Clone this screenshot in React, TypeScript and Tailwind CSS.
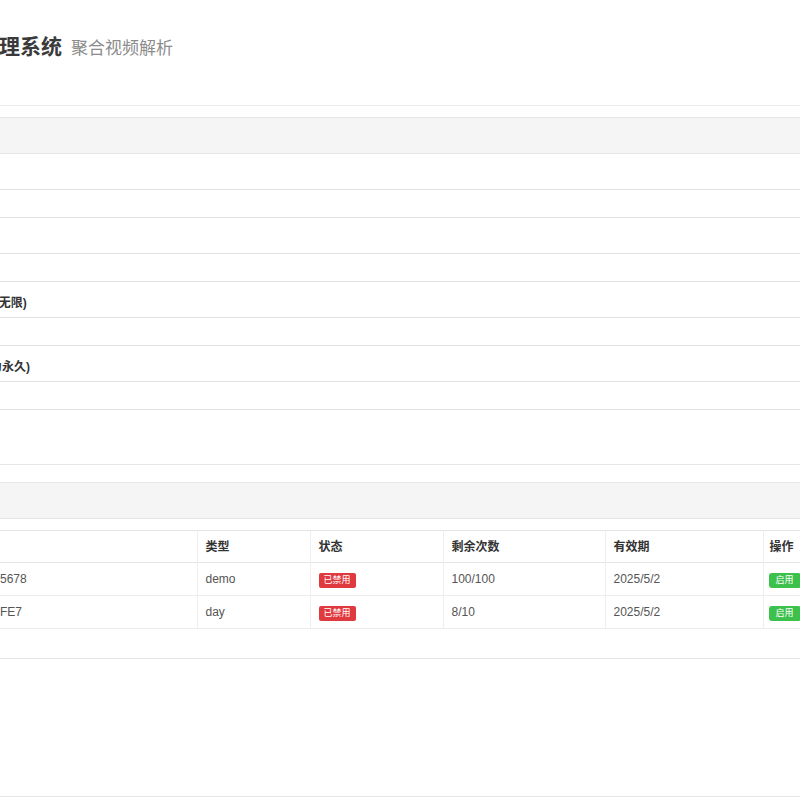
import React from 'react';

interface CardKey {
  id: string;
  code: string;
  type: string;
  remaining: string;
  expires: string;
}

const keys: CardKey[] = [
  { id: '1', code: 'DEMO-5678', type: 'demo', remaining: '100/100', expires: '2025/5/2' },
  { id: '2', code: 'ABC3DFE7', type: 'day', remaining: '8/10', expires: '2025/5/2' },
];

const fields = ['类型', '数量', '次数(0为无限)', '天数 (0为永久)'];

export default function App() {
  return (
    <div
      className="w-[800px] h-[800px] overflow-hidden bg-white text-[#333]"
      style={{ fontFamily: '"Liberation Sans", "Noto Sans CJK SC", sans-serif' }}
    >
      <div className="-ml-[64px] w-[1000px]">
        <header className="pt-[32px] pb-[43px] border-b border-[#ececec] flex items-baseline gap-[9px]">
          <h1 className="text-[21px] leading-[30px] font-bold text-[#3a3a3a]">卡密管理系统</h1>
          <span className="text-[17px] text-[#8c8c8c]">聚合视频解析</span>
        </header>

        <section className="mt-[11px] border border-[#e6e6e6]">
          <div className="h-[36px] bg-[#f5f5f5] border-b border-[#e6e6e6] px-[15px] text-[14px] leading-[35px]">生成</div>
          <div className="px-[15px]">
            {fields.map((label) => (
              <div key={label} className="pt-[13px]">
                <label className="block text-[12px] leading-[17px] mb-[5px] font-bold text-[#333]">{label}</label>
                <div className="h-[29px] border border-[#e2e2e2] rounded-[3px] bg-white" />
              </div>
            ))}
            <div className="pt-[12px] pb-[14px]">
              <button className="h-[28px] px-1 text-[12px] bg-[#337ab7] text-white rounded-[3px]">生成</button>
            </div>
          </div>
        </section>

        <section className="mt-[17px] border border-[#e6e6e6]">
          <div className="h-[36px] bg-[#f5f5f5] border-b border-[#e6e6e6] px-[15px] text-[14px] leading-[35px]">列表</div>
          <div className="px-[15px] pt-[11px] pb-[29px]">
            <table className="w-full table-fixed border-collapse text-[12px]">
              <colgroup>
                <col className="w-[245px]" />
                <col className="w-[113px]" />
                <col className="w-[133px]" />
                <col className="w-[162px]" />
                <col className="w-[158px]" />
                <col />
              </colgroup>
              <thead>
                <tr className="h-[32px] border-t border-b border-[#e4e4e4] text-left">
                  <th className="px-2 font-bold text-[#333] border-r border-[#eeeeee]">卡密</th>
                  <th className="px-2 font-bold text-[#333] border-r border-[#eeeeee]">类型</th>
                  <th className="px-2 font-bold text-[#333] border-r border-[#eeeeee]">状态</th>
                  <th className="px-2 font-bold text-[#333] border-r border-[#eeeeee]">剩余次数</th>
                  <th className="px-2 font-bold text-[#333] border-r border-[#eeeeee]">有效期</th>
                  <th className="px-[6px] font-bold text-[#333]">操作</th>
                </tr>
              </thead>
              <tbody>
                {keys.map((row) => (
                  <tr key={row.id} className="h-[33px] border-b border-[#ececec] text-[#555]">
                    <td className="px-2 border-r border-[#eeeeee]">{row.code}</td>
                    <td className="px-2 border-r border-[#eeeeee]">{row.type}</td>
                    <td className="px-2 border-r border-[#eeeeee]">
                      <span className="inline-block h-[15px] px-[5px] leading-[15px] text-[9px] rounded-[2px] bg-[#e0393e] text-white">已禁用</span>
                    </td>
                    <td className="px-2 border-r border-[#eeeeee]">{row.remaining}</td>
                    <td className="px-2 border-r border-[#eeeeee]">{row.expires}</td>
                    <td className="px-[5px]">
                      <button className="h-[15px] px-[7px] leading-[15px] text-[9px] rounded-[3px] bg-[#3cc14c] text-white">启用</button>
                    </td>
                  </tr>
                ))}
              </tbody>
            </table>
          </div>
        </section>

        <section className="mt-[137px] border border-[#e6e6e6] h-[60px]" />
      </div>
    </div>
  );
}
